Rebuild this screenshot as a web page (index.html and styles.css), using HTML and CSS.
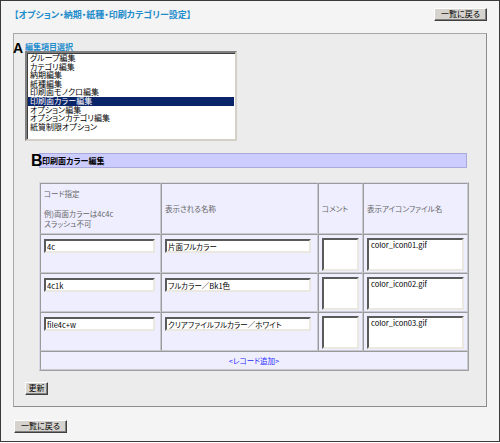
FILE: index.html
```html
<!DOCTYPE html>
<html lang="ja">
<head>
<meta charset="utf-8">
<title>オプション・納期・紙種・印刷カテゴリー設定</title>
<link rel="stylesheet" href="styles.css">
</head>
<body>
<div class="page">
  <div class="topbar">
    <h1 class="title">【オプション・納期・紙種・印刷カテゴリー設定】</h1>
    <button class="btn btn-back" type="button">一覧に戻る</button>
  </div>

  <div class="panel">
    <div class="section-a">
      <span class="mark mark-a">A</span>
      <div class="label">編集項目選択</div>
      <div class="listbox">
        <div class="item">グループ編集</div>
        <div class="item">カテゴリ編集</div>
        <div class="item">納期編集</div>
        <div class="item">紙種編集</div>
        <div class="item">印刷面モノクロ編集</div>
        <div class="item selected">印刷面カラー編集</div>
        <div class="item">オプション編集</div>
        <div class="item">オプションカテゴリ編集</div>
        <div class="item">紙質制限オプション</div>
      </div>
    </div>

    <div class="section-b">
      <span class="mark mark-b">B</span>
      <div class="bar">印刷面カラー編集</div>
      <table class="grid">
        <colgroup>
          <col class="c1"><col class="c2"><col class="c3"><col class="c4">
        </colgroup>
        <thead>
          <tr class="head">
            <th>コード指定<br><br>例)両面カラーは4c4c<br>スラッシュ不可</th>
            <th>表示される名称</th>
            <th>コメント</th>
            <th>表示アイコンファイル名</th>
          </tr>
        </thead>
        <tbody>
          <tr class="row">
            <td><input class="in-code" type="text" value="4c"></td>
            <td><input class="in-name" type="text" value="片面フルカラー"></td>
            <td><textarea class="ta-comment"></textarea></td>
            <td><textarea class="ta-icon">color_icon01.gif</textarea></td>
          </tr>
          <tr class="row">
            <td><input class="in-code" type="text" value="4c1k"></td>
            <td><input class="in-name" type="text" value="フルカラー／Bk1色"></td>
            <td><textarea class="ta-comment"></textarea></td>
            <td><textarea class="ta-icon">color_icon02.gif</textarea></td>
          </tr>
          <tr class="row">
            <td><input class="in-code" type="text" value="file4c+w"></td>
            <td><input class="in-name" type="text" value="クリアファイルフルカラー／ホワイト"></td>
            <td><textarea class="ta-comment"></textarea></td>
            <td><textarea class="ta-icon">color_icon03.gif</textarea></td>
          </tr>
          <tr class="foot">
            <td colspan="4"><a class="add" href="#">&lt;レコード追加&gt;</a></td>
          </tr>
        </tbody>
      </table>
    </div>

    <button class="btn btn-update" type="button">更新</button>
  </div>

  <button class="btn btn-back2" type="button">一覧に戻る</button>
</div>
</body>
</html>
```

FILE: styles.css
```css
html, body {
  margin: 0;
  padding: 0;
  background: #ffffff;
}

body {
  font-family: "Noto Sans CJK JP", "Liberation Sans", sans-serif;
  font-size: 8px;
  font-feature-settings: "palt" 1;
  color: #000;
}

.page {
  box-sizing: border-box;
  width: 500px;
  height: 442px;
  border: 1px solid #3a3a3a;
  background: #f4f4f4;
  padding: 6px 12px 0 12px;
}

.topbar {
  display: flex;
  justify-content: space-between;
  align-items: flex-start;
  height: 14px;
}

.title {
  margin: 2px 0 0 1px;
  font-size: 9px;
  line-height: 11px;
  font-weight: bold;
  color: #1f8ccc;
  letter-spacing: 0;
}

.btn {
  font-family: "Noto Sans CJK JP", "Liberation Sans", sans-serif;
  font-feature-settings: "palt" 1;
  font-size: 8px;
  line-height: 8px;
  color: #000;
  background: #d6d3ce;
  border: 1px solid;
  border-color: #ffffff #404040 #404040 #ffffff;
  box-shadow: inset -1px -1px 0 #808080;
  padding: 1px 0 2px;
  margin: 0;
  cursor: default;
}

.btn-back {
  width: 53px;
  height: 13px;
  margin-top: 1px;
}

.panel {
  position: relative;
  margin-top: 12px;
  height: 374px;
  box-sizing: border-box;
  background: #ececec;
  border: 1px solid;
  border-color: #a8a8a8 #8c8c8c #8c8c8c #a8a8a8;
  padding: 8px 0 0 11px;
}

.section-a {
  position: relative;
}

.mark {
  position: absolute;
  font-family: "Liberation Sans", sans-serif;
  font-weight: bold;
  color: #000;
  background: transparent;
}

.mark-a {
  left: -12px;
  top: -1px;
  font-size: 14px;
  line-height: 14px;
}

.mark-b {
  left: -8px;
  top: 0px;
  font-size: 16px;
  line-height: 16px;
}

.label {
  font-weight: bold;
  color: #1f8ccc;
  line-height: 9px;
  height: 9px;
}

.listbox {
  box-sizing: border-box;
  width: 212px;
  height: 90px;
  background: #fff;
  border: 2px solid;
  border-color: #808080 #d4d0c8 #d4d0c8 #808080;
  box-shadow: inset 1px 1px 0 #404040;
  padding: 1px 1px 0 2px;
}

.item {
  height: 8.6px;
  line-height: 8.6px;
  padding-left: 1px;
  white-space: nowrap;
}

.item.selected {
  background: #0a246a;
  color: #fff;
  margin-left: -1px;
  padding-left: 2px;
}

.section-b {
  position: relative;
  margin: 12px 0 0 14px;
  width: 428px;
}

.bar {
  box-sizing: border-box;
  height: 15px;
  background: #ccccff;
  border: 1px solid #a9a9dc;
  font-weight: bold;
  line-height: 13px;
  padding-left: 2px;
}

.grid {
  margin-top: 14px;
  width: 428px;
  border-collapse: separate;
  border-spacing: 0;
  background: #eeeeff;
  border: 1px solid;
  border-color: #d8d8e8 #a0a0a0 #a0a0a0 #d8d8e8;
  table-layout: fixed;
}

.c1 { width: 121px; }
.c2 { width: 157px; }
.c3 { width: 45px; }
.c4 { width: 105px; }

.grid th, .grid td {
  border: 1px solid;
  border-color: #9a9a9a #c8c8d0 #c8c8d0 #9a9a9a;
  padding: 0;
}

.grid th {
  height: 49px;
  font-weight: normal;
  text-align: left;
  vertical-align: middle;
  color: #666;
  font-size: 7.5px;
  line-height: 10px;
  padding-left: 3px;
}

.row td {
  height: 39px;
  vertical-align: top;
  padding: 3px 0 0 3px;
  box-sizing: border-box;
}

input, textarea {
  box-sizing: border-box;
  margin: 0;
  background: #fff;
  color: #000;
  font-family: "Noto Sans CJK JP", "Liberation Sans", sans-serif;
  font-feature-settings: "palt" 1;
  font-size: 7.5px;
  border: 2px solid;
  border-color: #5a5a5a #ebe8e2 #ebe8e2 #5a5a5a;
  outline: none;
  resize: none;
  display: block;
}

input {
  height: 14px;
  padding: 0 1px;
  margin-top: 1px;
}

textarea {
  height: 33px;
  padding: 0 2px;
  line-height: 10px;
  overflow: hidden;
}

.in-code { width: 111px; }
.in-name { width: 146px; }
.ta-comment { width: 37px; }
.ta-icon { width: 97px; }

.foot td {
  height: 17px;
  text-align: center;
  vertical-align: middle;
  padding: 0;
}

.add {
  color: #2a2aff;
  text-decoration: none;
  font-size: 7.5px;
}

.btn-update {
  display: block;
  margin-top: 11px;
  width: 23px;
  height: 13px;
}

.btn-back2 {
  display: block;
  margin-top: 13px;
  margin-left: 1px;
  width: 53px;
  height: 13px;
}
```
